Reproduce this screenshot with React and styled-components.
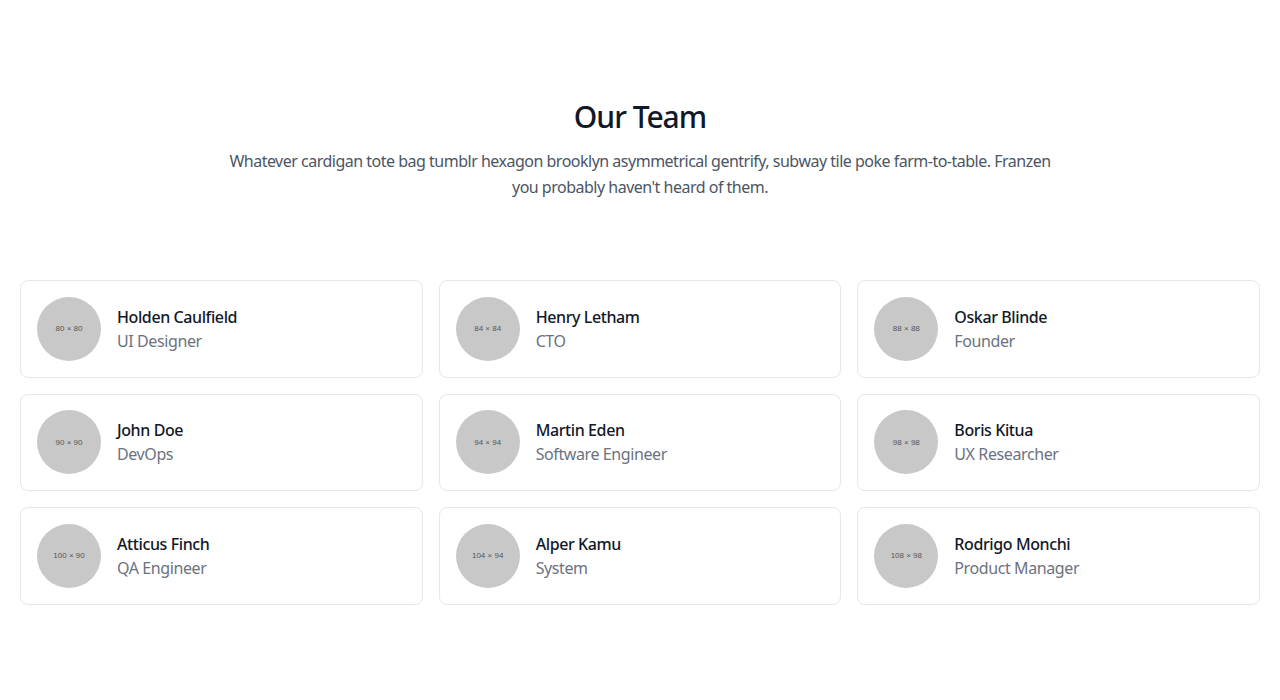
import React from "react";
import styled, { createGlobalStyle } from "styled-components";

const Global = createGlobalStyle`
  *, *::before, *::after { box-sizing: border-box; }
  body {
    margin: 0;
    background: #ffffff;
    color: #4b5563;
    font-family: "Noto Sans", "Open Sans", sans-serif;
    letter-spacing: -0.4px;
  }
`;

const Section = styled.section`
  padding: 96px 0;
`;

const Container = styled.div`
  padding: 0 20px;
  margin: 0 auto;
`;

const Header = styled.div`
  display: flex;
  flex-direction: column;
  align-items: center;
  text-align: center;
  margin-bottom: 80px;
`;

const Title = styled.h1`
  margin: 0 0 16px;
  padding-top: 3px;
  height: 36px;
  font-size: 30px;
  line-height: 36px;
  font-weight: 500;
  letter-spacing: -1px;
  color: #111827;
`;

const Lead = styled.p`
  margin: 0;
  width: 66.6667%;
  font-size: 16px;
  line-height: 26px;
  letter-spacing: -0.5px;
  color: #4b5563;
`;

const Grid = styled.div`
  display: grid;
  grid-template-columns: repeat(3, 1fr);
  gap: 16px;
`;

const Card = styled.div`
  display: flex;
  align-items: center;
  padding: 15.75px 16px;
  border: 1px solid #e5e7eb;
  border-radius: 8px;
`;

const Avatar = styled.div`
  flex-shrink: 0;
  width: 64px;
  height: 64px;
  margin-right: 16px;
  border-radius: 50%;
  background: #c8c8c8;
  display: flex;
  align-items: center;
  justify-content: center;
  font-family: "Liberation Sans", sans-serif;
  font-size: 8px;
  letter-spacing: 0;
  color: #555555;
`;

const Info = styled.div`
  flex-grow: 1;
`;

const Name = styled.h2`
  margin: 0;
  font-size: 16px;
  line-height: 24px;
  font-weight: 500;
  color: #111827;
`;

const Role = styled.p`
  margin: 0;
  font-size: 16px;
  line-height: 24px;
  color: #6b7280;
`;

const members = [
  ["Holden Caulfield", "UI Designer", "80 × 80"],
  ["Henry Letham", "CTO", "84 × 84"],
  ["Oskar Blinde", "Founder", "88 × 88"],
  ["John Doe", "DevOps", "90 × 90"],
  ["Martin Eden", "Software Engineer", "94 × 94"],
  ["Boris Kitua", "UX Researcher", "98 × 98"],
  ["Atticus Finch", "QA Engineer", "100 × 90"],
  ["Alper Kamu", "System", "104 × 94"],
  ["Rodrigo Monchi", "Product Manager", "108 × 98"],
];

export default function App() {
  return (
    <>
      <Global />
      <Section>
        <Container>
          <Header>
            <Title>Our Team</Title>
            <Lead>
              Whatever cardigan tote bag tumblr hexagon brooklyn asymmetrical
              gentrify, subway tile poke farm-to-table. Franzen you probably
              haven't heard of them.
            </Lead>
          </Header>
          <Grid>
            {members.map(([name, role, size]) => (
              <Card key={name}>
                <Avatar>{size}</Avatar>
                <Info>
                  <Name>{name}</Name>
                  <Role>{role}</Role>
                </Info>
              </Card>
            ))}
          </Grid>
        </Container>
      </Section>
    </>
  );
}
